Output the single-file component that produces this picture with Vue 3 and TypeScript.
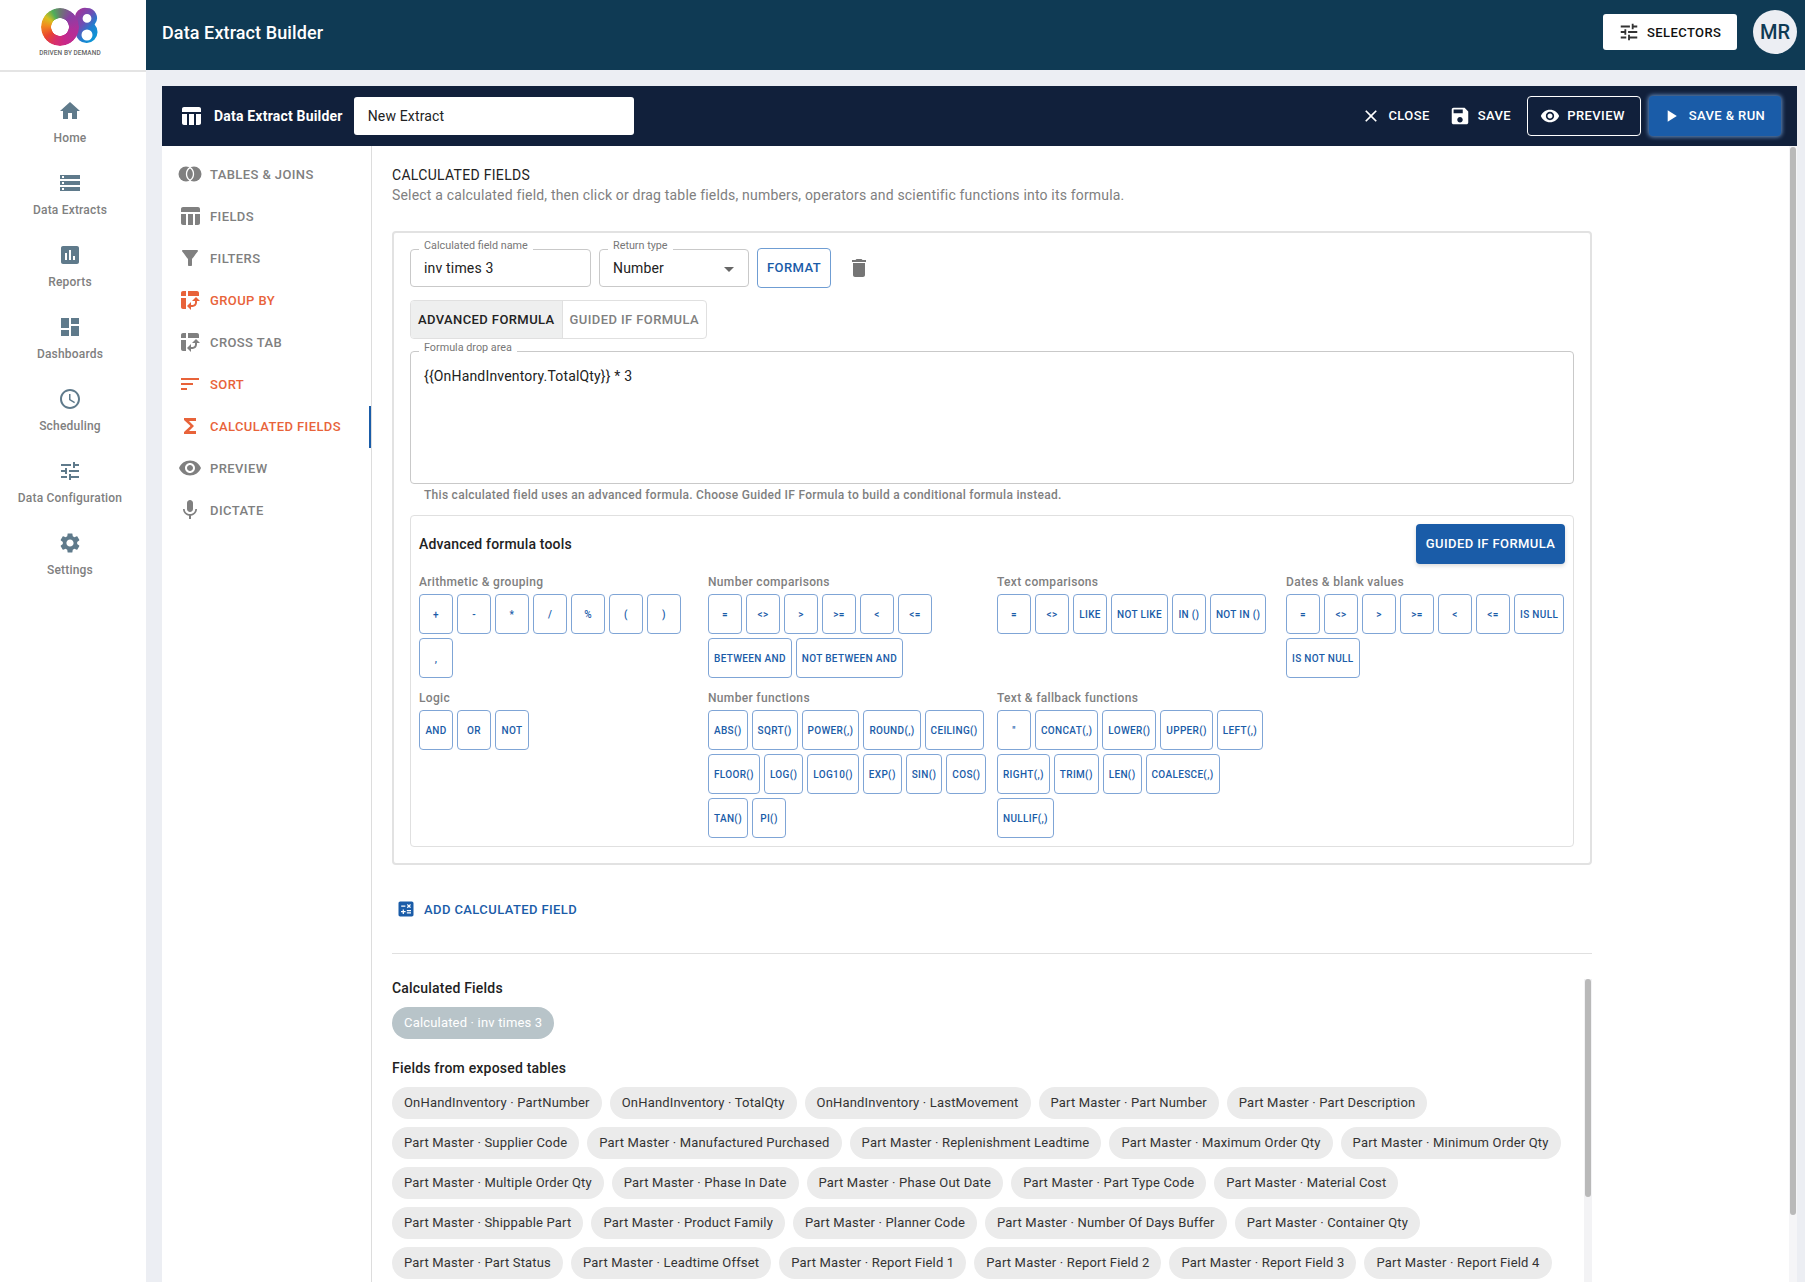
<script setup lang="ts">
const ICONS: Record<string, string> = {
  home: "M10 20v-6h4v6h5v-8h3L12 3 2 12h3v8z",
  storage: "M2 20h20v-4H2v4zm2-3h2v2H4v-2zM2 4v4h20V4H2zm4 3H4V5h2v2zm-4 7h20v-4H2v4zm2-3h2v2H4v-2z",
  reports: "M19 3H5c-1.1 0-2 .9-2 2v14c0 1.1.9 2 2 2h14c1.1 0 2-.9 2-2V5c0-1.1-.9-2-2-2zM9 17H7v-7h2v7zm4 0h-2V7h2v10zm4 0h-2v-4h2v4z",
  dashboard: "M3 13h8V3H3v10zm0 8h8v-6H3v6zm10 0h8V11h-8v10zm0-18v6h8V3h-8z",
  schedule: "M11.99 2C6.47 2 2 6.48 2 12s4.47 10 9.99 10C17.52 22 22 17.52 22 12S17.52 2 11.99 2zM12 20c-4.42 0-8-3.58-8-8s3.58-8 8-8 8 3.58 8 8-3.58 8-8 8zm.5-13H11v6l5.25 3.15.75-1.23-4.5-2.67z",
  tune: "M3 17v2h6v-2H3zM3 5v2h10V5H3zm10 16v-2h8v-2h-8v-2h-2v6h2zM7 9v2H3v2h4v2h2V9H7zm14 4v-2H11v2h10zm-6-4h2V7h4V5h-4V3h-2v6z",
  settings: "M19.14 12.94c.04-.3.06-.61.06-.94 0-.32-.02-.64-.07-.94l2.03-1.58c.18-.14.23-.41.12-.61l-1.92-3.32c-.12-.22-.37-.29-.59-.22l-2.39.96c-.5-.38-1.03-.7-1.62-.94l-.36-2.54c-.04-.24-.24-.41-.48-.41h-3.84c-.24 0-.43.17-.47.41l-.36 2.54c-.59.24-1.13.57-1.62.94l-2.39-.96c-.22-.08-.47 0-.59.22L2.74 8.87c-.12.21-.08.47.12.61l2.03 1.58c-.05.3-.09.63-.09.94s.02.64.07.94l-2.03 1.58c-.18.14-.23.41-.12.61l1.92 3.32c.12.22.37.29.59.22l2.39-.96c.5.38 1.03.7 1.62.94l.36 2.54c.05.24.24.41.48.41h3.84c.24 0 .44-.17.47-.41l.36-2.54c.59-.24 1.13-.56 1.62-.94l2.39.96c.22.08.47 0 .59-.22l1.92-3.32c.12-.22.07-.47-.12-.61l-2.01-1.58zM12 15.6c-1.98 0-3.6-1.62-3.6-3.6s1.62-3.6 3.6-3.6 3.6 1.62 3.6 3.6-1.62 3.6-3.6 3.6z",
  table: "M10 10.02h5V21h-5zM17 21h3c1.1 0 2-.9 2-2v-9h-5v11zm3-18H5c-1.1 0-2 .9-2 2v3h19V5c0-1.1-.9-2-2-2zM3 19c0 1.1.9 2 2 2h3V10H3v9z",
  filter: "M4.25 5.61C6.27 8.2 10 13 10 13v6c0 .55.45 1 1 1h2c.55 0 1-.45 1-1v-6s3.72-4.8 5.74-7.39c.51-.66.04-1.61-.79-1.61H5.04c-.83 0-1.3.95-.79 1.61z",
  pivot: "M10 8h11V5c0-1.1-.9-2-2-2h-9v5zM3 8h5V3H5c-1.1 0-2 .9-2 2v3zm2 13h3V10H3v9c0 1.1.9 2 2 2zm8 1l-4-4 4-4zm1-9l4-4 4 4zm.58 6H13v-2h1.58c1.33 0 2.42-1.08 2.42-2.42V13h2v1.58c0 2.44-1.98 4.42-4.42 4.42z",
  sort: "M3 18h6v-2H3v2zM3 6v2h18V6H3zm0 7h12v-2H3v2z",
  sigma: "M18 4H6v2l6.5 6L6 18v2h12v-3h-7l5-5-5-5h7z",
  eye: "M12 4.5C7 4.5 2.73 7.61 1 12c1.73 4.39 6 7.5 11 7.5s9.27-3.11 11-7.5c-1.73-4.39-6-7.5-11-7.5zM12 17c-2.76 0-5-2.24-5-5s2.24-5 5-5 5 2.24 5 5-2.24 5-5 5zm0-8c-1.66 0-3 1.34-3 3s1.34 3 3 3 3-1.34 3-3-1.34-3-3-3z",
  mic: "M12 14c1.66 0 2.99-1.34 2.99-3L15 5c0-1.66-1.34-3-3-3S9 3.34 9 5v6c0 1.66 1.34 3 3 3zm5.3-3c0 3-2.54 5.1-5.3 5.1S6.7 14 6.7 11H5c0 3.41 2.72 6.23 6 6.72V21h2v-3.28c3.28-.48 6-3.3 6-6.72h-1.7z",
  close: "M19 6.41L17.59 5 12 10.59 6.41 5 5 6.41 10.59 12 5 17.59 6.41 19 12 13.41 17.59 19 19 17.59 13.41 12z",
  save: "M17 3H5c-1.11 0-2 .9-2 2v14c0 1.1.89 2 2 2h14c1.1 0 2-.9 2-2V7l-4-4zm-5 16c-1.66 0-3-1.34-3-3s1.34-3 3-3 3 1.34 3 3-1.34 3-3 3zm3-10H5V5h10v4z",
  play: "M8 5v14l11-7z",
  trash: "M6 19c0 1.1.9 2 2 2h8c1.1 0 2-.9 2-2V7H6v12zM19 4h-3.5l-1-1h-5l-1 1H5v2h14V4z",
  calc: "M19 3H5c-1.1 0-2 .9-2 2v14c0 1.1.9 2 2 2h14c1.1 0 2-.9 2-2V5c0-1.1-.9-2-2-2zm-5.97 4.06L14.09 6l1.41 1.41L16.91 6l1.06 1.06-1.41 1.41 1.41 1.41-1.06 1.06-1.41-1.4-1.41 1.41-1.06-1.06 1.41-1.41-1.41-1.42zm-6.78.66h5v1.5h-5v-1.5zM11.5 16h-2v2H8v-2H6v-1.5h2v-2h1.5v2h2V16zm6.5 1.25h-5v-1.5h5v1.5zm0-2.5h-5v-1.5h5v1.5z",
};

const formulaText = "{" + "{OnHandInventory.TotalQty}" + "} * 3";

const sideItems = [
  { label: "Home", icon: "home" },
  { label: "Data Extracts", icon: "storage" },
  { label: "Reports", icon: "reports" },
  { label: "Dashboards", icon: "dashboard" },
  { label: "Scheduling", icon: "schedule" },
  { label: "Data Configuration", icon: "tune" },
  { label: "Settings", icon: "settings" },
];

const steps = [
  { label: "TABLES & JOINS", icon: "join" },
  { label: "FIELDS", icon: "table" },
  { label: "FILTERS", icon: "filter" },
  { label: "GROUP BY", icon: "pivot", warn: true },
  { label: "CROSS TAB", icon: "pivot" },
  { label: "SORT", icon: "sort", warn: true },
  { label: "CALCULATED FIELDS", icon: "sigma", warn: true, active: true },
  { label: "PREVIEW", icon: "eye" },
  { label: "DICTATE", icon: "mic" },
];

const toolGroups = [
  { title: "Arithmetic & grouping", tools: ["+", "-", "*", "/", "%", "(", ")", ","] },
  { title: "Number comparisons", tools: ["=", "<>", ">", ">=", "<", "<=", "BETWEEN AND", "NOT BETWEEN AND"] },
  { title: "Text comparisons", tools: ["=", "<>", "LIKE", "NOT LIKE", "IN ()", "NOT IN ()"] },
  { title: "Dates & blank values", tools: ["=", "<>", ">", ">=", "<", "<=", "IS NULL", "IS NOT NULL"] },
  { title: "Logic", tools: ["AND", "OR", "NOT"] },
  {
    title: "Number functions",
    tools: ["ABS()", "SQRT()", "POWER(,)", "ROUND(,)", "CEILING()", "FLOOR()", "LOG()", "LOG10()", "EXP()", "SIN()", "COS()", "TAN()", "PI()"],
  },
  {
    title: "Text & fallback functions",
    tools: ["''", "CONCAT(,)", "LOWER()", "UPPER()", "LEFT(,)", "RIGHT(,)", "TRIM()", "LEN()", "COALESCE(,)", "NULLIF(,)"],
  },
];

const fields = [
  "OnHandInventory · PartNumber",
  "OnHandInventory · TotalQty",
  "OnHandInventory · LastMovement",
  "Part Master · Part Number",
  "Part Master · Part Description",
  "Part Master · Supplier Code",
  "Part Master · Manufactured Purchased",
  "Part Master · Replenishment Leadtime",
  "Part Master · Maximum Order Qty",
  "Part Master · Minimum Order Qty",
  "Part Master · Multiple Order Qty",
  "Part Master · Phase In Date",
  "Part Master · Phase Out Date",
  "Part Master · Part Type Code",
  "Part Master · Material Cost",
  "Part Master · Shippable Part",
  "Part Master · Product Family",
  "Part Master · Planner Code",
  "Part Master · Number Of Days Buffer",
  "Part Master · Container Qty",
  "Part Master · Part Status",
  "Part Master · Leadtime Offset",
  "Part Master · Report Field 1",
  "Part Master · Report Field 2",
  "Part Master · Report Field 3",
  "Part Master · Report Field 4",
];
</script>

<template>
  <div class="app">
    <aside class="side">
      <div class="logo">
        <div class="logo-mark">
          <span class="logo-o"></span>
          <svg class="logo-8" width="26" height="40" viewBox="0 0 26 40">
            <defs>
              <linearGradient id="eight" x1="0" y1="0" x2="0.8" y2="1">
                <stop offset="0" stop-color="#b02c92" />
                <stop offset="0.45" stop-color="#6d4fb5" />
                <stop offset="0.7" stop-color="#1f7fd0" />
                <stop offset="1" stop-color="#0a9ad6" />
              </linearGradient>
            </defs>
            <path
              fill="url(#eight)"
              fill-rule="evenodd"
              d="M13 1a10 10 0 0 1 7.6 16.5A11 11 0 1 1 4 18 10 10 0 0 1 13 1zm0 6a4.4 4.4 0 1 0 0 8.8A4.4 4.4 0 0 0 13 7zm0 15.5a5.5 5.5 0 1 0 0 11 5.5 5.5 0 0 0 0-11z"
            />
          </svg>
        </div>
        <div class="logo-text">DRIVEN BY DEMAND</div>
      </div>
      <nav class="side-nav">
        <div v-for="item in sideItems" :key="item.label" class="side-item">
          <svg width="24" height="24" viewBox="0 0 24 24"><path :d="ICONS[item.icon]" /></svg>
          <span>{{ item.label }}</span>
        </div>
      </nav>
    </aside>

    <div class="main">
      <header class="topbar">
        <h1>Data Extract Builder</h1>
        <button class="selectors">
          <svg width="22" height="22" viewBox="0 0 24 24"><path :d="ICONS.tune" /></svg>
          SELECTORS
        </button>
        <div class="avatar">MR</div>
      </header>

      <div class="page">
        <section class="card">
          <div class="card-head">
            <svg class="head-icon" width="24" height="24" viewBox="0 0 24 24"><path :d="ICONS.table" /></svg>
            <strong>Data Extract Builder</strong>
            <div class="name-input">New Extract</div>
            <div class="head-actions">
              <button class="flat">
                <svg width="20" height="20" viewBox="0 0 24 24"><path :d="ICONS.close" /></svg>
                CLOSE
              </button>
              <button class="flat">
                <svg width="22" height="22" viewBox="0 0 24 24"><path :d="ICONS.save" /></svg>
                SAVE
              </button>
              <button class="outline">
                <svg width="20" height="20" viewBox="0 0 24 24"><path :d="ICONS.eye" /></svg>
                PREVIEW
              </button>
              <button class="run">
                <svg width="20" height="20" viewBox="0 0 24 24"><path :d="ICONS.play" /></svg>
                SAVE &amp; RUN
              </button>
            </div>
          </div>

          <div class="card-body">
            <nav class="steps">
              <div v-for="step in steps" :key="step.label" class="step" :class="{ warn: step.warn, active: step.active }">
                <svg v-if="step.icon === 'join'" width="24" height="24" viewBox="0 0 24 24">
                  <circle cx="8" cy="12" r="7.5" />
                  <circle cx="16" cy="12" r="7.5" />
                  <path class="lens" d="M12 5.66A7.5 7.5 0 0 1 12 18.34 7.5 7.5 0 0 1 12 5.66z" />
                </svg>
                <svg v-else width="24" height="24" viewBox="0 0 24 24"><path :d="ICONS[step.icon]" /></svg>
                <span>{{ step.label }}</span>
              </div>
            </nav>

            <main class="content">
              <h2>CALCULATED FIELDS</h2>
              <p class="sub">Select a calculated field, then click or drag table fields, numbers, operators and scientific functions into its formula.</p>

              <div class="panel">
                <div class="row">
                  <div class="control name">
                    <label>Calculated field name</label>
                    inv times 3
                  </div>
                  <div class="control type">
                    <label>Return type</label>
                    Number
                    <i class="caret"></i>
                  </div>
                  <button class="format">FORMAT</button>
                  <svg class="trash" width="24" height="24" viewBox="0 0 24 24"><path :d="ICONS.trash" /></svg>
                </div>

                <div class="tabs">
                  <div class="tab on">ADVANCED FORMULA</div>
                  <div class="tab">GUIDED IF FORMULA</div>
                </div>

                <div class="control formula">
                  <label>Formula drop area</label>
                  {{ formulaText }}
                </div>
                <p class="helper">This calculated field uses an advanced formula. Choose Guided IF Formula to build a conditional formula instead.</p>

                <div class="tools">
                  <div class="tools-head">
                    <strong>Advanced formula tools</strong>
                    <button class="guided">GUIDED IF FORMULA</button>
                  </div>
                  <div class="tool-grid">
                    <div v-for="group in toolGroups" :key="group.title" class="tool-group">
                      <div class="group-title">{{ group.title }}</div>
                      <div class="tool-list">
                        <button v-for="tool in group.tools" :key="tool" class="tool">{{ tool }}</button>
                      </div>
                    </div>
                  </div>
                </div>
              </div>

              <button class="add">
                <svg width="20" height="20" viewBox="0 0 24 24"><path :d="ICONS.calc" /></svg>
                ADD CALCULATED FIELD
              </button>
              <div class="divider"></div>

              <div class="field-area">
                <h3 class="calc-title">Calculated Fields</h3>
                <div class="chips"><span class="chip off">Calculated · inv times 3</span></div>
                <h3 class="exposed-title">Fields from exposed tables</h3>
                <div class="chips">
                  <span v-for="field in fields" :key="field" class="chip">{{ field }}</span>
                </div>
                <div class="inner-track"><div class="inner-thumb"></div></div>
              </div>
            </main>
            <div class="outer-track"><div class="outer-thumb"></div></div>
          </div>
        </section>
      </div>
    </div>
  </div>
</template>

<style scoped>
.app {
  display: grid;
  grid-template-columns: 146px 1fr;
  height: 100vh;
  overflow: hidden;
  background: #eceef3;
  font-family: Roboto, "Liberation Sans", sans-serif;
  color: #222;
}
button {
  font-family: inherit;
  cursor: pointer;
}

/* left rail */
.side {
  background: #fff;
}
.logo {
  height: 62px;
  border-bottom: 2px solid #e4e4e4;
  display: flex;
  flex-direction: column;
  align-items: center;
  padding: 8px 6px 0 0;
}
.logo-mark {
  display: flex;
  height: 38px;
  align-items: center;
}
.logo-o {
  display: block;
  width: 38px;
  height: 38px;
  border-radius: 50%;
  background: conic-gradient(#6b7a70 0deg, #8a3fa5 45deg, #b0309a 100deg, #c8288a 160deg, #d8306a 200deg, #e8452f 235deg, #f28a1e 275deg, #d8c020 305deg, #4fae5a 335deg, #6b7a70 360deg);
  -webkit-mask: radial-gradient(circle at 50% 50%, transparent 8.5px, #000 9px);
  mask: radial-gradient(circle at 50% 50%, transparent 8.5px, #000 9px);
}
.logo-8 {
  margin-left: -5px;
}
.logo-text {
  margin-top: 3px;
  font-size: 6.5px;
  font-weight: 500;
  letter-spacing: 0.05px;
  color: #666;
  white-space: nowrap;
}
.side-nav {
  padding: 27px 6px 0 0;
}
.side-item {
  height: 72px;
  display: flex;
  flex-direction: column;
  align-items: center;
  gap: 7px;
  font-size: 12px;
  line-height: 16px;
  font-weight: 500;
  letter-spacing: 0.2px;
  color: #808080;
  box-sizing: border-box;
  white-space: nowrap;
}
.side-item svg {
  fill: #5f7a8b;
}

/* top bar */
.main {
  display: flex;
  flex-direction: column;
  min-width: 0;
  height: 100vh;
}
.topbar {
  height: 70px;
  box-sizing: border-box;
  flex: none;
  background: #0f3a54;
  display: flex;
  align-items: center;
  padding: 0 8px 6px 16px;
}
.topbar h1 {
  margin: 0;
  font-size: 18px;
  font-weight: 500;
  letter-spacing: 0.1px;
  color: #fff;
}
.selectors {
  margin-left: auto;
  width: 134px;
  height: 36px;
  display: flex;
  align-items: center;
  gap: 7px;
  padding: 0 0 0 15px;
  border: 0;
  border-radius: 3px;
  background: #fff;
  color: #111;
  font-size: 13px;
  font-weight: 500;
  letter-spacing: 0.4px;
}
.selectors svg {
  fill: #333;
}
.avatar {
  width: 44px;
  height: 44px;
  margin-left: 16px;
  border-radius: 50%;
  background: #eceef3;
  color: #0f3a54;
  display: flex;
  align-items: center;
  justify-content: center;
  font-size: 20px;
  font-weight: 500;
}

/* builder card */
.page {
  flex: 1;
  min-height: 0;
  padding: 16px 8px 0 16px;
}
.card {
  height: 100%;
  display: flex;
  flex-direction: column;
  background: #fff;
}
.card-head {
  height: 60px;
  flex: none;
  background: #11203b;
  display: flex;
  align-items: center;
  padding: 0 16px 0 17px;
  color: #fff;
}
.card-head svg {
  fill: currentColor;
  flex: none;
}
.head-icon {
  margin-right: 11px;
}
.card-head strong {
  font-size: 14px;
  font-weight: 700;
  letter-spacing: 0.2px;
  white-space: nowrap;
}
.name-input {
  width: 280px;
  height: 38px;
  margin-left: 11px;
  padding-left: 14px;
  box-sizing: border-box;
  background: #fff;
  border-radius: 3px;
  color: #222;
  font-size: 14px;
  letter-spacing: 0.15px;
  line-height: 38px;
}
.head-actions {
  margin-left: auto;
  display: flex;
  align-items: center;
  gap: 8px;
}
.head-actions button {
  display: flex;
  align-items: center;
  justify-content: center;
  height: 40px;
  color: #fff;
  font-size: 13px;
  font-weight: 500;
  letter-spacing: 0.4px;
  white-space: nowrap;
}
.flat {
  border: 0;
  background: none;
  gap: 7px;
  padding: 0 7px 1px 5px;
}
.flat + .flat {
  padding: 0 8px 1px 4px;
}
.outline {
  width: 114px;
  gap: 7px;
  padding: 0 3px 1px 0;
  background: none;
  border: 1px solid #fff;
  border-radius: 4px;
}
.run {
  width: 132px;
  gap: 8px;
  padding: 0 4px 1px 0;
  background: #1a5ca8;
  border: 0;
  border-radius: 4px;
  box-shadow: 0 0 4px 1px rgba(120, 170, 230, 0.8);
}

.card-body {
  position: relative;
  flex: 1;
  min-height: 0;
  display: flex;
  overflow: hidden;
}
.steps {
  width: 210px;
  flex: none;
  box-sizing: border-box;
  padding-top: 7px;
  border-right: 1px solid #ddd;
}
.step {
  position: relative;
  height: 42px;
  display: flex;
  align-items: center;
  gap: 8px;
  padding-left: 16px;
  font-size: 13px;
  font-weight: 500;
  letter-spacing: 0.4px;
  color: #808080;
}
.step svg {
  fill: #808080;
  flex: none;
}
.step .lens {
  stroke: #fff;
  stroke-width: 1.3;
}
.step.warn {
  color: #e8633a;
}
.step.warn svg {
  fill: #e8633a;
}
.step.active::after {
  content: "";
  position: absolute;
  right: 0;
  top: 1px;
  bottom: -1px;
  width: 2px;
  background: #1a5ca8;
}

.content {
  flex: 1;
  min-width: 0;
  padding: 19px 0 0 20px;
  letter-spacing: 0.17px;
}
h2 {
  margin: 0;
  font-size: 14px;
  line-height: 20px;
  font-weight: 400;
  letter-spacing: 0.3px;
}
.sub {
  margin: 0;
  font-size: 14px;
  line-height: 20px;
  letter-spacing: 0.18px;
  color: #808080;
}
.panel {
  width: 1200px;
  box-sizing: border-box;
  margin-top: 26px;
  padding: 15px 16px 16px;
  border: 2px solid #e2e2e2;
  border-radius: 4px;
}
.row {
  display: flex;
  align-items: center;
  height: 40px;
}
.control {
  position: relative;
  box-sizing: border-box;
  border: 1px solid #c9c9c9;
  border-radius: 4px;
  font-size: 14px;
  color: #222;
  padding-left: 13px;
}
.control label {
  position: absolute;
  left: 8px;
  top: -11px;
  padding: 0 5px;
  background: linear-gradient(transparent 50%, #fff 50%);
  font-size: 10.8px;
  line-height: 14px;
  letter-spacing: 0;
  color: #777;
}
.name,
.type {
  height: 38px;
  line-height: 36px;
}
.name {
  width: 181px;
}
.type {
  width: 150px;
  margin-left: 8px;
}
.caret {
  position: absolute;
  right: 14px;
  top: 17px;
  border: 5px solid transparent;
  border-top-color: #666;
  border-bottom: 0;
}
.format {
  width: 74px;
  height: 40px;
  margin-left: 8px;
  padding: 0 0 1px;
  background: #fff;
  border: 1px solid #6f9dd3;
  border-radius: 4px;
  color: #1a5ca8;
  font-size: 13px;
  font-weight: 500;
  letter-spacing: 0.4px;
}
.trash {
  margin-left: 16px;
  fill: #757575;
}
.tabs {
  display: flex;
  width: fit-content;
  margin-top: 12px;
  height: 39px;
  border: 1px solid #e0e0e0;
  border-radius: 4px;
  box-sizing: border-box;
  overflow: hidden;
}
.tab {
  display: flex;
  align-items: center;
  padding: 0 7px 1px;
  font-size: 13px;
  font-weight: 500;
  letter-spacing: 0.4px;
  color: #808080;
}
.tab.on {
  background: #eeefef;
  color: #222;
  border-right: 1px solid #e0e0e0;
}
.formula {
  height: 133px;
  margin-top: 12px;
  padding-top: 14px;
  line-height: 20px;
}
.helper {
  margin: 3px 0 0;
  padding-left: 14px;
  font-size: 12px;
  line-height: 16px;
  font-weight: 500;
  letter-spacing: 0.28px;
  color: #808080;
}
.tools {
  margin-top: 12px;
  padding: 8px;
  border: 1px solid #e0e0e0;
  border-radius: 4px;
}
.tools-head {
  height: 40px;
  display: flex;
  align-items: center;
  justify-content: space-between;
  margin-bottom: 10px;
}
.tools-head strong {
  font-size: 14px;
  font-weight: 500;
}
.guided {
  width: 149px;
  height: 40px;
  padding: 0 0 1px;
  border: 0;
  border-radius: 4px;
  background: #1a5ca8;
  color: #fff;
  font-size: 13px;
  font-weight: 500;
  letter-spacing: 0.4px;
  box-shadow: 0 2px 4px rgba(0, 0, 0, 0.15);
}
.tool-grid {
  display: grid;
  grid-template-columns: repeat(4, minmax(0, 1fr));
  gap: 12px 10px;
}
.group-title {
  font-size: 12px;
  line-height: 16px;
  font-weight: 500;
  letter-spacing: 0.33px;
  color: #808080;
  margin-bottom: 4px;
}
.tool-list {
  display: flex;
  flex-wrap: wrap;
  gap: 4px;
}
.tool {
  min-width: 34px;
  height: 40px;
  padding: 0 5px;
  background: #fff;
  border: 1px solid #7fa5d6;
  border-radius: 4px;
  color: #1a5ca8;
  font-size: 10px;
  font-weight: 500;
  letter-spacing: 0.33px;
  white-space: nowrap;
}

.add {
  display: flex;
  align-items: center;
  gap: 8px;
  height: 36px;
  margin-top: 26px;
  padding: 0 0 0 4px;
  border: 0;
  background: none;
  color: #1a5ca8;
  font-size: 13px;
  font-weight: 500;
  letter-spacing: 0.4px;
}
.add svg {
  fill: #1a5ca8;
}
.divider {
  width: 1200px;
  height: 1px;
  margin-top: 26px;
  background: #e0e0e0;
}
.field-area {
  position: relative;
  width: 1200px;
  height: 400px;
  padding-top: 24px;
  box-sizing: border-box;
}
h3 {
  margin: 0;
  font-size: 14px;
  line-height: 20px;
  font-weight: 500;
  letter-spacing: 0.2px;
  color: #222;
}
.exposed-title {
  margin-top: 19px;
}
.chips {
  display: flex;
  flex-wrap: wrap;
  gap: 8px;
  margin-top: 9px;
  width: 1180px;
}
.chip {
  height: 32px;
  padding: 0 12px;
  border-radius: 16px;
  background: #ebebeb;
  color: #333;
  font-size: 13px;
  line-height: 32px;
  letter-spacing: 0.18px;
  white-space: nowrap;
}
.chip.off {
  background: #b8c4c9;
  color: #fff;
}
.inner-track {
  position: absolute;
  top: 25px;
  bottom: 0;
  right: 0;
  width: 8px;
  background: #f3f3f5;
}
.inner-thumb {
  margin-left: 1px;
  width: 6px;
  height: 218px;
  border-radius: 3px;
  background: #b9b9b9;
}
.outer-track {
  position: absolute;
  top: 0;
  bottom: 0;
  right: 0;
  width: 8px;
  background: #f5f5f7;
}
.outer-thumb {
  margin-left: 1px;
  margin-top: 1px;
  width: 6px;
  height: 1068px;
  border-radius: 3px;
  background: #b9b9b9;
}
</style>

<style>
html,
body {
  overflow: hidden;
}
</style>
